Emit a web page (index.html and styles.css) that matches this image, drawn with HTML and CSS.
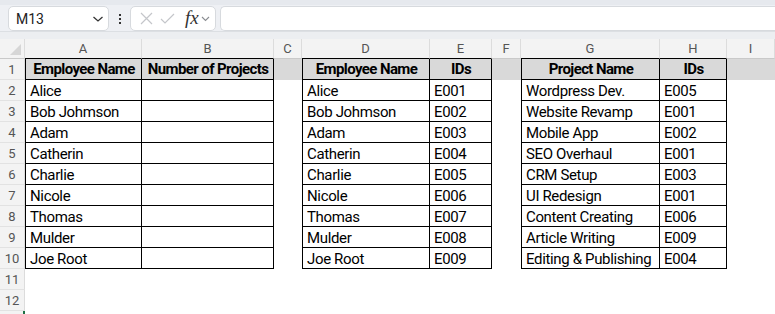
FILE: index.html
```html
<!DOCTYPE html>
<html lang="en">
<head>
    <meta charset="UTF-8">
    <meta name="viewport" content="width=device-width, initial-scale=1.0">
    <title>Employee Projects</title>
    <link rel="stylesheet" href="styles.css">
</head>
<body>
    <div class="toolbar">
        <div class="namebox">
            <span>M13</span>
            <svg class="chev" width="12" height="8" viewBox="0 0 12 8"><path d="M1.5 2 L6 6 L10.5 2" fill="none" stroke="#333" stroke-width="1.3"/></svg>
        </div>
        <div class="dots"><i></i><i></i><i></i></div>
        <div class="fxbox">
            <svg width="13" height="13" viewBox="0 0 13 13"><path d="M1 1 L12 12 M12 1 L1 12" stroke="#c4c6ca" stroke-width="1.2"/></svg>
            <svg width="15" height="13" viewBox="0 0 15 13"><path d="M1 7 L5 11 L14 2" fill="none" stroke="#c4c6ca" stroke-width="1.2"/></svg>
            <span class="fx">fx</span>
            <svg width="9" height="6" viewBox="0 0 9 6"><path d="M1 1 L4.5 4.5 L8 1" fill="none" stroke="#8a8d92" stroke-width="1.1"/></svg>
        </div>
        <div class="formula"></div>
    </div>

    <div class="sheet">
        <!-- column letters -->
        <div class="corner"><span></span></div>
        <div class="ch edge">A</div>
        <div class="ch edge">B</div>
        <div class="ch">C</div>
        <div class="ch edge">D</div>
        <div class="ch edge">E</div>
        <div class="ch">F</div>
        <div class="ch edge">G</div>
        <div class="ch edge">H</div>
        <div class="ch">I</div>

        <!-- row 1 -->
        <div class="rh">1</div>
        <div class="c head first">Employee Name</div>
        <div class="c head">Number of Projects</div>
        <div class="c fill"></div>
        <div class="c head first">Employee Name</div>
        <div class="c head">IDs</div>
        <div class="c fill"></div>
        <div class="c head first">Project Name</div>
        <div class="c head">IDs</div>
        <div class="c fill"></div>

        <div class="rh">2</div>
        <div class="c box first">Alice</div><div class="c box"></div><div class="c"></div>
        <div class="c box first">Alice</div><div class="c box">E001</div><div class="c"></div>
        <div class="c box first">Wordpress Dev.</div><div class="c box">E005</div><div class="c"></div>

        <div class="rh">3</div>
        <div class="c box first">Bob Johmson</div><div class="c box"></div><div class="c"></div>
        <div class="c box first">Bob Johmson</div><div class="c box">E002</div><div class="c"></div>
        <div class="c box first">Website Revamp</div><div class="c box">E001</div><div class="c"></div>

        <div class="rh">4</div>
        <div class="c box first">Adam</div><div class="c box"></div><div class="c"></div>
        <div class="c box first">Adam</div><div class="c box">E003</div><div class="c"></div>
        <div class="c box first">Mobile App</div><div class="c box">E002</div><div class="c"></div>

        <div class="rh">5</div>
        <div class="c box first">Catherin</div><div class="c box"></div><div class="c"></div>
        <div class="c box first">Catherin</div><div class="c box">E004</div><div class="c"></div>
        <div class="c box first">SEO Overhaul</div><div class="c box">E001</div><div class="c"></div>

        <div class="rh">6</div>
        <div class="c box first">Charlie</div><div class="c box"></div><div class="c"></div>
        <div class="c box first">Charlie</div><div class="c box">E005</div><div class="c"></div>
        <div class="c box first">CRM Setup</div><div class="c box">E003</div><div class="c"></div>

        <div class="rh">7</div>
        <div class="c box first">Nicole</div><div class="c box"></div><div class="c"></div>
        <div class="c box first">Nicole</div><div class="c box">E006</div><div class="c"></div>
        <div class="c box first">UI Redesign</div><div class="c box">E001</div><div class="c"></div>

        <div class="rh">8</div>
        <div class="c box first">Thomas</div><div class="c box"></div><div class="c"></div>
        <div class="c box first">Thomas</div><div class="c box">E007</div><div class="c"></div>
        <div class="c box first">Content Creating</div><div class="c box">E006</div><div class="c"></div>

        <div class="rh">9</div>
        <div class="c box first">Mulder</div><div class="c box"></div><div class="c"></div>
        <div class="c box first">Mulder</div><div class="c box">E008</div><div class="c"></div>
        <div class="c box first">Article Writing</div><div class="c box">E009</div><div class="c"></div>

        <div class="rh">10</div>
        <div class="c box first">Joe Root</div><div class="c box"></div><div class="c"></div>
        <div class="c box first">Joe Root</div><div class="c box">E009</div><div class="c"></div>
        <div class="c box first">Editing &amp; Publishing</div><div class="c box">E004</div><div class="c"></div>

        <div class="rh">11</div>
        <div class="c empty"></div>
        <div class="rh">12</div>
        <div class="c empty"></div>
        <div class="rh selected"></div>
        <div class="c empty"></div>
    </div>
</body>
</html>
```

FILE: styles.css
```css
* {
    box-sizing: border-box;
}

body {
    margin: 0;
    height: 100vh;
    background: #fff;
    font-family: Roboto, "Liberation Sans", sans-serif;
    overflow: hidden;
}

/* formula bar */
.toolbar {
    height: 39px;
    background: #eef0f4;
    border-top: 5px solid #e6e9ee;
    display: flex;
    align-items: flex-start;
    padding: 1px 0 0 8px;
    position: relative;
}

.toolbar::after {
    content: "";
    position: absolute;
    left: 0;
    right: 0;
    bottom: 0;
    height: 7px;
    background: #eceef1;
    border-top: 1px solid #dcdfe3;
}

.namebox {
    width: 101px;
    height: 25px;
    background: #fff;
    border: 1px solid #d7dade;
    border-radius: 5px;
    display: flex;
    align-items: center;
    justify-content: space-between;
    padding: 0 4px 0 7px;
    font-size: 14px;
    color: #222;
}

.dots {
    width: 21px;
    height: 25px;
    display: flex;
    flex-direction: column;
    align-items: center;
    justify-content: center;
    gap: 2px;
}

.dots i {
    width: 2px;
    height: 2px;
    background: #333;
}

.fxbox {
    width: 86px;
    height: 25px;
    background: #fff;
    border: 1px solid #d7dade;
    border-radius: 5px;
    display: flex;
    align-items: center;
    gap: 7px;
    padding: 0 0 0 9px;
}

.fx {
    font-family: "Liberation Serif", serif;
    font-style: italic;
    font-size: 19px;
    line-height: 19px;
    color: #333;
    margin: 0 -5px 2px 3px;
}

.formula {
    flex: 1;
    height: 25px;
    margin-left: 4px;
    background: #fff;
    border: 1px solid #d7dade;
    border-right: none;
    border-radius: 5px 0 0 5px;
}

/* grid */
.sheet {
    display: grid;
    grid-template-columns: 25px 117px 132px 28px 128px 62px 29px 139px 67px 1fr;
    grid-template-rows: 20px repeat(12, 21px) 3px;
    font-size: 15px;
    letter-spacing: -0.35px;
    color: #000;
}

.corner {
    background: #f3f3f3;
    border-right: 1px solid #dcdcdc;
    border-bottom: 1px solid #c9c9c9;
    position: relative;
}

.corner span {
    position: absolute;
    right: 3px;
    bottom: 3px;
    width: 11px;
    height: 11px;
    background: #d6d6d6;
    clip-path: polygon(100% 0, 100% 100%, 0 100%);
}

.ch {
    background: #f3f3f3;
    border-right: 1px solid #dcdcdc;
    border-bottom: 1px solid #c9c9c9;
    color: #555;
    font-size: 13px;
    letter-spacing: 0;
    text-align: center;
    line-height: 19px;
}

.ch.edge {
    border-bottom-color: #000;
}

.rh {
    grid-column: 1;
    background: #f3f3f3;
    border-right: 1px solid #dcdcdc;
    border-bottom: 1px solid #e2e2e2;
    color: #555;
    font-size: 13px;
    letter-spacing: 0;
    text-align: center;
    line-height: 22px;
}

.rh.selected {
    border-right: 2px solid #1e7145;
    border-bottom: none;
}

.c {
    padding: 0 3px 0 4px;
    line-height: 22px;
    white-space: nowrap;
    overflow: hidden;
}

.c.empty {
    grid-column: 2 / -1;
}

.c.box {
    border-right: 1px solid #000;
    border-bottom: 1px solid #000;
}

.c.first {
    border-left: 1px solid #000;
}

.c.head {
    background: #d9d9d9;
    border-right: 1px solid #000;
    border-bottom: 1px solid #000;
    font-weight: bold;
    letter-spacing: -0.6px;
    text-align: center;
    line-height: 21px;
}

.c.fill {
    background: #d9d9d9;
}
```
